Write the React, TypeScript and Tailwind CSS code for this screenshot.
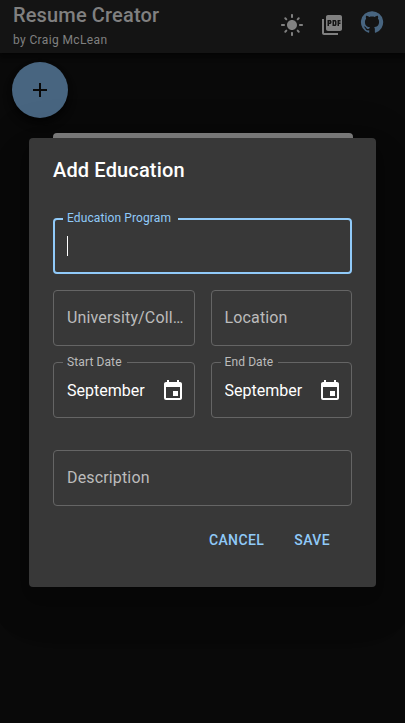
import type { ReactNode } from "react";
import { MdAdd, MdEvent, MdLightMode, MdPictureAsPdf } from "react-icons/md";

function GitHubIcon() {
  return (
    <svg width="24" height="24" viewBox="0 0 24 24" fill="currentColor">
      <path d="M12 1.27a11 11 0 00-3.48 21.46c.55.09.73-.28.73-.55v-1.84c-3.03.64-3.67-1.46-3.67-1.46-.55-1.29-1.28-1.65-1.28-1.65-.92-.65.1-.65.1-.65 1.1 0 1.73 1.1 1.73 1.1.92 1.65 2.57 1.2 3.21.92a2 2 0 01.64-1.47c-2.47-.27-5.04-1.19-5.04-5.5 0-1.1.46-2.1 1.2-2.84a3.76 3.76 0 010-2.93s.91-.28 3.11 1.1c1.8-.49 3.7-.49 5.5 0 2.1-1.38 3.02-1.1 3.02-1.1a3.76 3.76 0 01.1 2.93c.83.74 1.2 1.74 1.2 2.94 0 4.21-2.57 5.13-5.04 5.4.45.37.82.92.82 2.02v3.03c0 .27.1.64.73.55A11 11 0 0012 1.27" />
    </svg>
  );
}

function Outlined({ label, focused, children }: { label: string; focused?: boolean; children?: ReactNode }) {
  return (
    <fieldset
      className={`h-[61px] min-w-0 rounded ${focused ? "border-2 border-[#90caf9] pl-2 text-[#90caf9]" : "border border-[#656565] pl-[9px] text-[#bcbcbc]"}`}
    >
      <legend className={`h-[11px] pl-1 text-xs leading-[11px] tracking-[0.11px] ${focused ? "pr-[7px]" : "pr-[5px]"}`}>{label}</legend>
      {children}
    </fieldset>
  );
}

function Empty({ label }: { label: string }) {
  return (
    <div className="flex h-14 min-w-0 items-center rounded border border-[#656565] pr-[9px] pl-[13px] text-[#bcbcbc]">
      <span className="truncate tracking-[0.15px]">{label}</span>
    </div>
  );
}

function DateField({ label }: { label: string }) {
  return (
    <Outlined label={label}>
      <div className="flex h-[45px] items-center pr-[9px] pl-1 text-white">
        <span className="w-[78px] overflow-hidden whitespace-nowrap">September</span>
        <MdEvent className="ml-auto size-6 shrink-0" />
      </div>
    </Outlined>
  );
}

export default function App() {
  return (
    <div className="relative h-[723px] w-full overflow-hidden bg-[#090909] font-['Roboto',sans-serif] text-base">
      <header className="flex h-[53px] justify-between bg-[#141414] pr-[21px] pl-[13px] text-[#808080] shadow-[0_2px_4px_-1px_rgba(0,0,0,0.4),0_4px_5px_rgba(0,0,0,0.3)]">
        <div>
          <h1 className="pt-[3px] text-xl leading-6 font-medium tracking-[0.15px]">Resume Creator</h1>
          <p className="pt-[3px] text-xs leading-5 tracking-[0.37px]">by Craig McLean</p>
        </div>
        <div className="flex gap-4 pt-[13px]">
          <MdLightMode className="size-6" />
          <MdPictureAsPdf className="size-6" />
          <span className="-mt-[3px] text-[#486580]"><GitHubIcon /></span>
        </div>
      </header>
      <button className="mt-[9px] ml-3 flex size-14 items-center justify-center rounded-full bg-[#486580] text-[#090909] shadow-[0_3px_5px_rgba(0,0,0,0.4),0_6px_10px_rgba(0,0,0,0.3)]">
        <MdAdd className="size-6" />
      </button>
      <div className="mt-[15px] ml-[53px] h-10 w-[300px] rounded bg-[#808080]" />

      <section
        role="dialog"
        className="absolute top-[138px] left-[29px] h-[449px] w-[347px] rounded bg-[#383838] px-6 shadow-[0_11px_15px_-7px_rgba(0,0,0,0.2),0_24px_38px_3px_rgba(0,0,0,0.14),0_9px_46px_8px_rgba(0,0,0,0.12)]"
      >
        <h2 className="pt-4 text-xl leading-8 font-medium tracking-[0.15px] text-white">Add Education</h2>
        <div className="mt-[27px] flex flex-col">
          <Outlined label="Education Program" focused>
            <div className="flex h-11 items-center pl-1">
              <span className="h-5 w-px bg-white" />
            </div>
          </Outlined>
          <div className="mt-4 grid grid-cols-2 gap-x-4">
            <Empty label="University/College" />
            <Empty label="Location" />
          </div>
          <div className="mt-[11px] grid grid-cols-2 gap-x-4">
            <DateField label="Start Date" />
            <DateField label="End Date" />
          </div>
          <div className="mt-8">
            <Empty label="Description" />
          </div>
        </div>
        <div className="mt-4 flex justify-end gap-2 pr-[11px] text-sm font-medium tracking-[0.4px] text-[#90caf9]">
          <button className="h-9 px-[11px]">CANCEL</button>
          <button className="h-9 px-[11px]">SAVE</button>
        </div>
      </section>
    </div>
  );
}
